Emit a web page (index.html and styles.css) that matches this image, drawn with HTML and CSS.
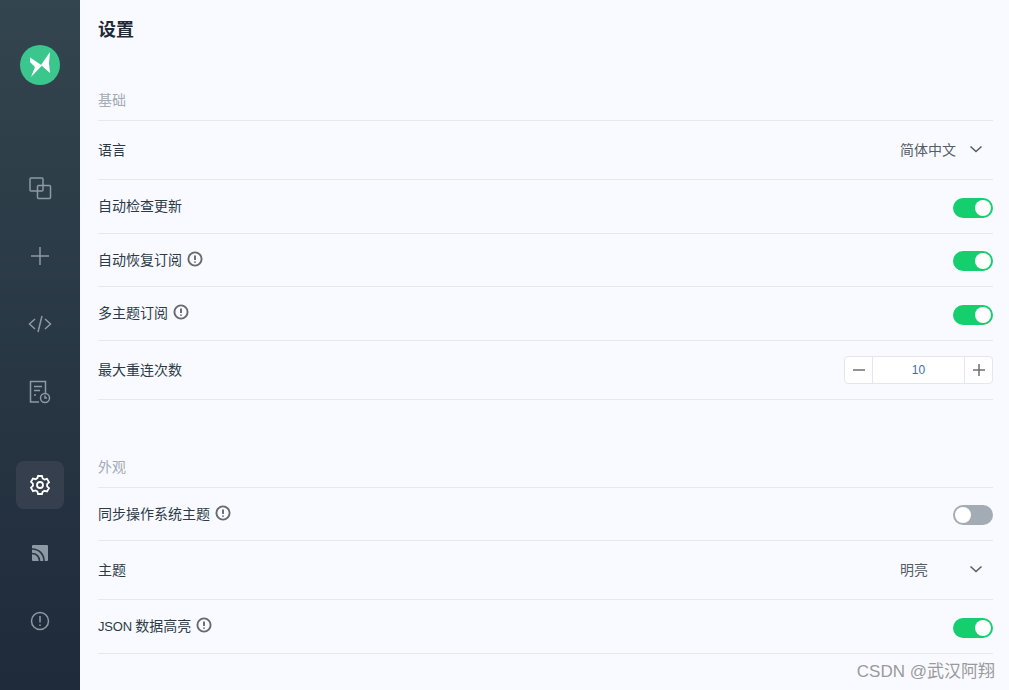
FILE: index.html
```html
<!DOCTYPE html>
<html>
	<head>
		<meta charset="UTF-8">
		<title>设置</title>
		<link rel="stylesheet" href="styles.css">
	</head>
	<body>
		<div class="app">
			<div class="side">
				<svg class="logo" width="40" height="40" viewBox="0 0 40 40">
					<circle cx="20" cy="20" r="20" fill="#3bc68e"/>
					<polygon points="10,12.500 22,20.500 11,32 15,22 10,17" fill="#fff"/>
					<polygon points="30,7 21,20 30,28 29,18" fill="#fff"/>
				</svg>
				<div class="nav">
					<div class="nav_item">
						<svg width="24" height="24" viewBox="0 0 24 24"><rect x="2" y="2" width="13" height="13" rx="1"/><rect x="9.500" y="9.500" width="13" height="13" rx="1"/></svg>
					</div>
					<div class="nav_item">
						<svg width="24" height="24" viewBox="0 0 24 24"><path d="M12 3v18M3 12h18"/></svg>
					</div>
					<div class="nav_item">
						<svg width="24" height="24" viewBox="0 0 24 24"><path d="M7 7l-5.500 5 5.500 5M17 7l5.500 5-5.500 5M14 4l-4 16"/></svg>
					</div>
					<div class="nav_item">
						<svg width="24" height="24" viewBox="0 0 24 24"><path d="M11 22H2.500V1.500h15V13M6 6.500h8M6 10.500h6M6 15h2"/><circle cx="17" cy="18" r="4.500"/><path d="M17 15.500V18h2"/></svg>
					</div>
				</div>
				<div class="nav nav_bottom">
					<div class="nav_item active">
						<svg width="24" height="24" viewBox="0 0 24 24"><path d="M10 3h4l.6 2.500 1.900 1.100 2.500-.7 2 3.400-1.900 1.800v2.200l1.900 1.800-2 3.400-2.500-.7-1.900 1.100L14 21h-4l-.6-2.500-1.900-1.100-2.500.7-2-3.400 1.900-1.800v-2.200L3 8.900l2-3.400 2.500.7 1.900-1.100z"/><circle cx="12" cy="12" r="3"/></svg>
					</div>
					<div class="nav_item">
						<svg width="24" height="24" viewBox="0 0 24 24"><rect class="rss_bg" x="4" y="4" width="16" height="16" rx="1"/><path class="rss_arc" d="M4 12.500c4.500 0 7.500 3 7.500 7.500M4 8c7 0 12 5 12 12"/></svg>
					</div>
					<div class="nav_item">
						<svg width="24" height="24" viewBox="0 0 24 24"><circle cx="12" cy="12" r="8.500"/><path d="M12 7v6.500M12 15.500v1.500"/></svg>
					</div>
				</div>
			</div>
			<div class="main">
				<h1 class="title">设置</h1>
				<h2 class="group_title">基础</h2>
				<div class="row row_tall">
					<span class="label">语言</span>
					<div class="select"><span>简体中文</span><svg width="14" height="14" viewBox="0 0 14 14"><path d="M1.500 4.500l5.500 5 5.500-5"/></svg></div>
				</div>
				<div class="row">
					<span class="label">自动检查更新</span>
					<div class="switch on"></div>
				</div>
				<div class="row">
					<span class="label">自动恢复订阅<svg class="tip" width="16" height="16" viewBox="0 0 16 16"><circle cx="8" cy="8" r="6.600"/><path d="M8 4.500v4.500M8 10.500v1.200"/></svg></span>
					<div class="switch on"></div>
				</div>
				<div class="row">
					<span class="label">多主题订阅<svg class="tip" width="16" height="16" viewBox="0 0 16 16"><circle cx="8" cy="8" r="6.600"/><path d="M8 4.500v4.500M8 10.500v1.200"/></svg></span>
					<div class="switch on"></div>
				</div>
				<div class="row row_tall">
					<span class="label">最大重连次数</span>
					<div class="num">
						<div class="num_btn"><svg width="14" height="14" viewBox="0 0 14 14"><path d="M1 7h12"/></svg></div>
						<div class="num_val">10</div>
						<div class="num_btn"><svg width="14" height="14" viewBox="0 0 14 14"><path d="M1 7h12M7 1v12"/></svg></div>
					</div>
				</div>
				<h2 class="group_title group_next">外观</h2>
				<div class="row">
					<span class="label">同步操作系统主题<svg class="tip" width="16" height="16" viewBox="0 0 16 16"><circle cx="8" cy="8" r="6.600"/><path d="M8 4.500v4.500M8 10.500v1.200"/></svg></span>
					<div class="switch"></div>
				</div>
				<div class="row row_tall">
					<span class="label">主题</span>
					<div class="select"><span>明亮</span><svg width="14" height="14" viewBox="0 0 14 14"><path d="M1.500 4.500l5.500 5 5.500-5"/></svg></div>
				</div>
				<div class="row">
					<span class="label"><span><span class="latin">JSON </span>数据高亮</span><svg class="tip" width="16" height="16" viewBox="0 0 16 16"><circle cx="8" cy="8" r="6.600"/><path d="M8 4.500v4.500M8 10.500v1.200"/></svg></span>
					<div class="switch on"></div>
				</div>
			</div>
		</div>
		<div class="mark">CSDN @武汉阿翔</div>
	</body>
</html>
```

FILE: styles.css
```css
*{padding: 0;margin: 0;box-sizing: border-box;}

html,body{height: 100%;overflow: hidden;}
body{font-family: "Liberation Sans","Noto Sans CJK SC",sans-serif;background: #f9faff;color: #2c3a47;}

.app{display: flex;height: 690px;}

.side{width: 80px;flex: none;display: flex;flex-direction: column;align-items: center;padding-top: 45px;background: linear-gradient(180deg,#33454e 0%,#1f2a3b 100%);}
.logo{display: block;margin-bottom: 79px;}
.nav{display: flex;flex-direction: column;gap: 20px;}
.nav_bottom{margin-top: 45px;}
.nav_item{width: 48px;height: 48px;border-radius: 8px;display: flex;align-items: center;justify-content: center;}
.nav_item svg{fill: none;stroke: #8d99a5;stroke-width: 1.5;}
.nav_item.active{background: #363f4d;}
.nav_item.active svg{stroke: #fff;stroke-width: 1.800;}
.nav_item .rss_bg{fill: #8d99a5;stroke: none;}
.nav_item .rss_arc{stroke: #2a3644;stroke-width: 1.6;}

.main{flex: 1;padding: 0 16px 0 18px;}
.title{font-size: 18px;font-weight: bold;line-height: 26px;padding-top: 17px;color: #1f2937;}
.group_title{font-size: 14px;font-weight: normal;line-height: 20px;color: #a3abb5;margin-top: 47px;padding-bottom: 10px;border-bottom: 1px solid #e6e8ef;}
.group_next{margin-top: 57px;}

.row{height: 53.5px;display: flex;align-items: center;justify-content: space-between;border-bottom: 1px solid #e6e8ef;}
.row_tall{height: 59px;}
.label{font-size: 14px;display: flex;align-items: center;padding-bottom: 2px;}
.latin{font-size: 13px;letter-spacing: -.2px;}
.tip{margin-left: 5px;fill: none;stroke: #66696e;stroke-width: 1.9;}

.select{width: 93px;display: flex;align-items: center;justify-content: space-between;padding-right: 10px;padding-bottom: 2px;font-size: 14px;color: #555d66;}
.select svg{fill: none;stroke: #555d66;stroke-width: 1.5;}

.switch{width: 40px;height: 20px;border-radius: 10px;background: #a3abb5;position: relative;margin-top: 3px;}
.switch:after{content: "";position: absolute;top: 2px;left: 2px;width: 16px;height: 16px;border-radius: 50%;background: #fff;}
.switch.on{background: #15cf6e;}
.switch.on:after{left: 22px;}

.num{width: 149px;height: 28px;display: flex;background: #fff;border: 1px solid #e3e6f0;border-radius: 4px;font-size: 12px;color: #42709e;}
.num_btn{width: 27px;flex: none;display: flex;align-items: center;justify-content: center;}
.num_btn svg{fill: none;stroke: #6c6f73;stroke-width: 1.5;}
.num_val{flex: 1;display: flex;align-items: center;justify-content: center;border-left: 1px solid #e3e6f0;border-right: 1px solid #e3e6f0;}

.mark{position: absolute;right: 14px;top: 662px;font-size: 17px;line-height: 20px;color: #9a9a9a;}
```
